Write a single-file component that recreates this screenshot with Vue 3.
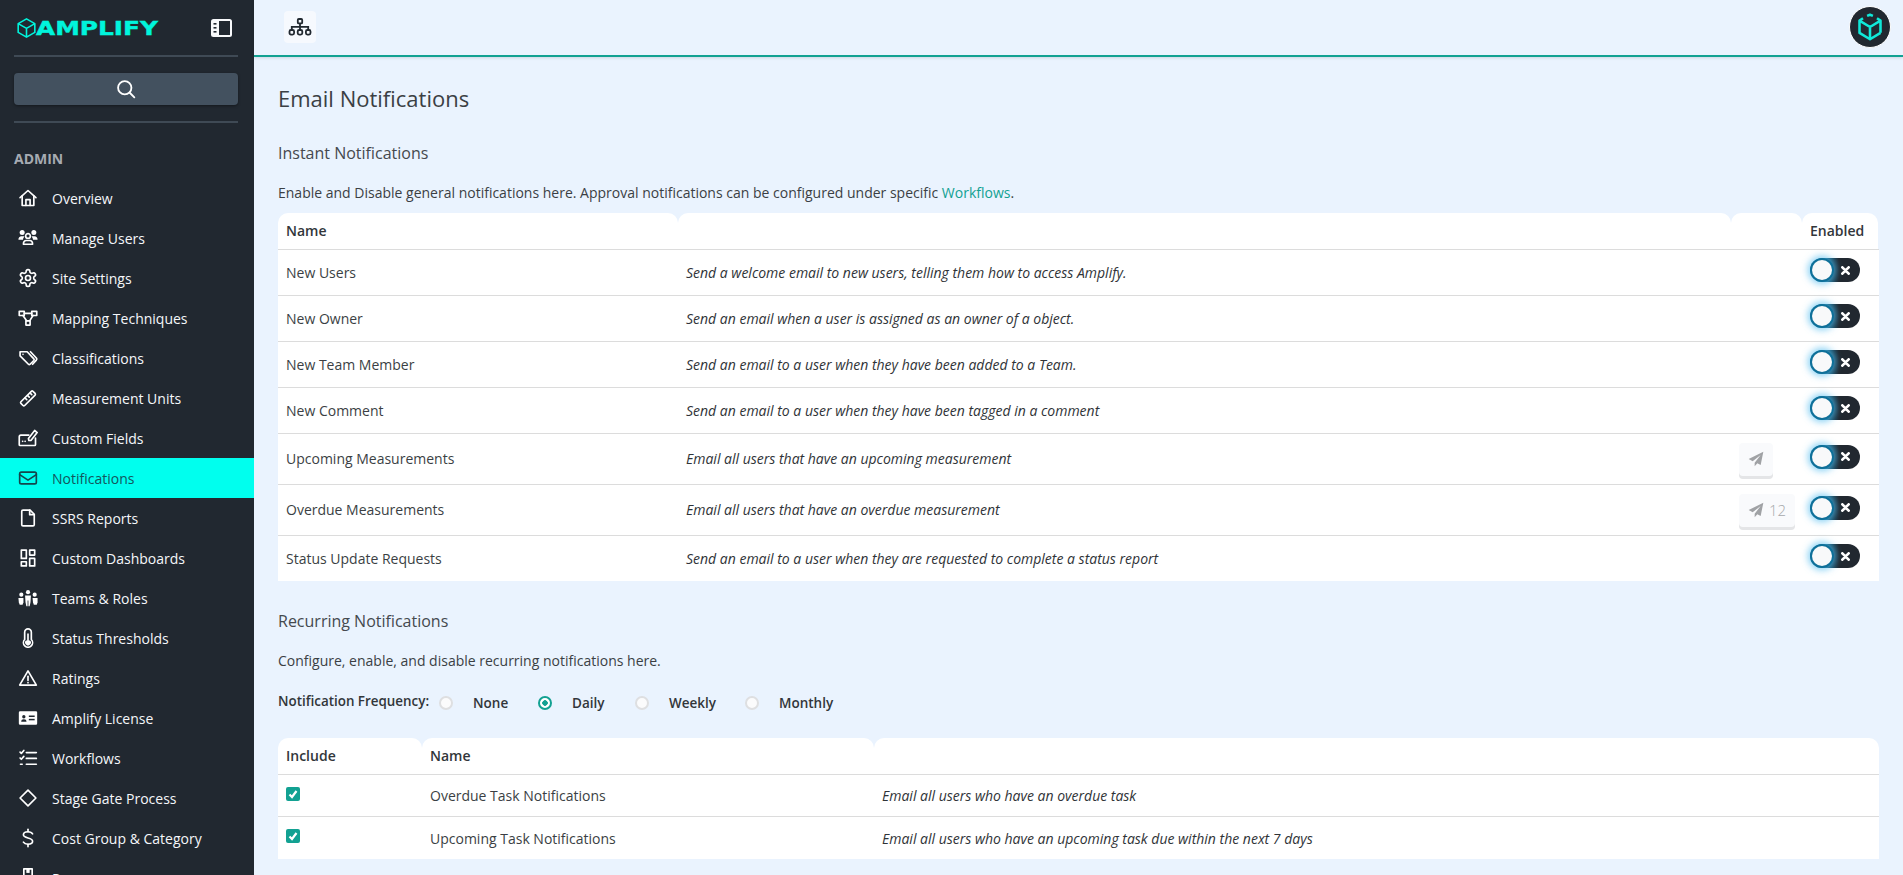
<script setup>
const navItems = [
  { label: 'Overview', icon: ['M2.5 11.5 12 3l9.5 8.5', 'M5 9.5V21h14V9.5', 'M9.5 21v-7h5v7'] },
  { label: 'Manage Users', solid: ['M2 5.5a3 3 0 1 1 6 0 3 3 0 0 1-6 0z', 'M16 5.5a3 3 0 1 1 6 0 3 3 0 0 1-6 0z', 'M0.5 14c0-2.5 1.5-4 3.5-4h2.5c.5 0 1 .2 1.3.5-1 .9-1.7 2-1.8 3.5z', 'M23.5 14c0-2.5-1.5-4-3.5-4h-2.5c-.5 0-1 .2-1.3.5 1 .9 1.7 2 1.8 3.5z'], icon: ['M9.2 9.5a2.8 2.8 0 1 1 5.6 0 2.8 2.8 0 0 1-5.6 0z', 'M6.5 19.5c0-3.2 1.6-4.5 3.5-4.5h4c1.900 0 3.500 1.300 3.500 4.500z'] },
  { label: 'Site Settings', icon: ['M12.22 2h-.44a2 2 0 0 0-2 2v.18a2 2 0 0 1-1 1.73l-.43.25a2 2 0 0 1-2 0l-.15-.08a2 2 0 0 0-2.73.73l-.22.38a2 2 0 0 0 .73 2.73l.15.1a2 2 0 0 1 1 1.72v.51a2 2 0 0 1-1 1.74l-.15.09a2 2 0 0 0-.73 2.73l.22.38a2 2 0 0 0 2.73.73l.15-.08a2 2 0 0 1 2 0l.43.25a2 2 0 0 1 1 1.73V20a2 2 0 0 0 2 2h.44a2 2 0 0 0 2-2v-.18a2 2 0 0 1 1-1.73l.43-.25a2 2 0 0 1 2 0l.15.08a2 2 0 0 0 2.73-.73l.22-.39a2 2 0 0 0-.73-2.73l-.15-.08a2 2 0 0 1-1-1.74v-.5a2 2 0 0 1 1-1.74l.15-.09a2 2 0 0 0 .73-2.73l-.22-.38a2 2 0 0 0-2.73-.73l-.15.08a2 2 0 0 1-2 0l-.43-.25a2 2 0 0 1-1-1.73V4a2 2 0 0 0-2-2z', 'M9 12a3 3 0 1 0 6 0 3 3 0 0 0-6 0z'] },
  { label: 'Mapping Techniques', icon: ['M1.500 4h6v5h-6z', 'M16.500 4h6v5h-6z', 'M9.500 15.500h5v5h-5z', 'M7.500 6.500h9', 'M6 9l4.500 6.500', 'M18 9l-4 6.500'] },
  { label: 'Classifications', icon: ['M2.500 4.500h8.500l8 8.500a1.500 1.500 0 0 1 0 2l-4.500 4.500a1.500 1.500 0 0 1-2 0l-10-10z', 'M15 4.500l7 7.500a2 2 0 0 1 0 2.500l-4.500 5'], dots: ['M6 7.500v.1'] },
  { label: 'Measurement Units', icon: ['M3.500 16.500 16 4a1.500 1.500 0 0 1 2 0l2.500 2.500a1.500 1.500 0 0 1 0 2L8 21a1.500 1.500 0 0 1-2 0l-2.500-2.500a1.500 1.500 0 0 1 0-2z', 'M8.500 12l2 2', 'M11.500 9l2 2', 'M14.500 6l2 2'] },
  { label: 'Custom Fields', icon: ['M13 8.500H3.500a2 2 0 0 0-2 2V20a1 1 0 0 0 1 1H20a1 1 0 0 0 1-1v-8', 'M13 15l-.5-2.500L20 3l3 2.500-7.500 9.500z', 'M5.500 16h.1', 'M8.500 16h.1'] },
  { label: 'Notifications', active: true, icon: ['M4 5h16a2 2 0 0 1 2 2v10a2 2 0 0 1-2 2H4a2 2 0 0 1-2-2V7a2 2 0 0 1 2-2z', 'M2 8l10 6.500L22 8'] },
  { label: 'SSRS Reports', icon: ['M6 2.500h8.500l5 5V20a1.500 1.500 0 0 1-1.500 1.500H6A1.500 1.500 0 0 1 4.500 20V4A1.500 1.500 0 0 1 6 2.500z', 'M14 2.500v5.500h5.500'] },
  { label: 'Custom Dashboards', icon: ['M4 2.500h6v10H4z', 'M14 2.500h6v6h-6z', 'M4 16.500h6v5H4z', 'M14 12.500h6v9h-6z'] },
  { label: 'Teams & Roles', solid: ['M1.500 8a2.500 2.500 0 1 1 5 0 2.500 2.500 0 0 1-5 0z', 'M9.500 5a2.500 2.500 0 1 1 5 0 2.500 2.500 0 0 1-5 0z', 'M17.500 8a2.500 2.500 0 1 1 5 0 2.500 2.500 0 0 1-5 0z', 'M8.500 9h7l-.5 8-1 5h-1.500v-7h-1v7H10l-1-5z', 'M0.500 12h6v5l-1 3H2l-1-3z', 'M17.500 12h6v5l-1 3H19l-1-3z'] },
  { label: 'Status Thresholds', solid: ['M9.500 15a3.500 3.500 0 1 0 5 0z', 'M11 6.500h2V16h-2z'], icon: ['M8 5a4 4 0 0 1 8 0v8.800a5.500 5.500 0 1 1-8 0z'] },
  { label: 'Ratings', icon: ['M12 3.500 22 20.500H2z', 'M12 10v5', 'M12 17.500v.1'] },
  { label: 'Amplify License', solid: ['M2.500 4h19a1.500 1.500 0 0 1 1.500 1.500v13a1.500 1.500 0 0 1-1.500 1.500h-19A1.500 1.500 0 0 1 1 18.500v-13A1.500 1.500 0 0 1 2.500 4z'], cutout: ['M5 10.500a2 2 0 1 1 4 0 2 2 0 0 1-4 0z', 'M3.800 16.500c0-2 1.200-3 3.200-3s3.200 1 3.200 3z', 'M13 9h7v1.800h-7z', 'M13 13h7v1.800h-7z'] },
  { label: 'Workflows', icon: ['M2.500 5l1.500 1.500L7 3', 'M2.500 12l1.500 1.500L7 10', 'M3 19.500h2', 'M10 5.500h12', 'M10 12.500h12', 'M10 19.500h12'] },
  { label: 'Stage Gate Process', icon: ['M12 2.500 21.500 12 12 21.500 2.500 12z'] },
  { label: 'Cost Group & Category', icon: ['M17.500 7c-1-1.800-3-2.500-5.500-2.500-3 0-5.500 1.300-5.500 3.700s2.500 3.100 5.500 3.800 5.500 1.500 5.500 4c0 2.300-2.500 3.500-5.500 3.500-2.500 0-4.500-.8-5.500-2.500', 'M12 1.500v3', 'M12 19.500v3'] },
  { label: 'Programs', icon: ['M7 1h10v22H7z', 'M11 1v4', 'M13 1v4'] }
]

const instantRows = [
  { name: 'New Users', desc: 'Send a welcome email to new users, telling them how to access Amplify.' },
  { name: 'New Owner', desc: 'Send an email when a user is assigned as an owner of a object.' },
  { name: 'New Team Member', desc: 'Send an email to a user when they have been added to a Team.' },
  { name: 'New Comment', desc: 'Send an email to a user when they have been tagged in a comment' },
  { name: 'Upcoming Measurements', desc: 'Email all users that have an upcoming measurement', send: true },
  { name: 'Overdue Measurements', desc: 'Email all users that have an overdue measurement', send: true, count: 12 },
  { name: 'Status Update Requests', desc: 'Send an email to a user when they are requested to complete a status report' }
]

const frequencies = [
  { label: 'None', cls: 'f-none' },
  { label: 'Daily', cls: 'f-daily', on: true },
  { label: 'Weekly', cls: 'f-weekly' },
  { label: 'Monthly', cls: 'f-monthly' }
]

const recurringRows = [
  { name: 'Overdue Task Notifications', desc: 'Email all users who have an overdue task' },
  { name: 'Upcoming Task Notifications', desc: 'Email all users who have an upcoming task due within the next 7 days' }
]
</script>

<template>
  <div class="shell">
    <aside class="sidebar">
      <div class="brand">
        <div class="logo">
          <svg class="logo-cube" viewBox="0 0 24 24" fill="none">
            <path d="M12 1.500 21.500 7v10L12 22.500 2.500 17V7z M2.500 7 12 12.500 21.500 7 M12 12.500v10" />
          </svg>
          <span class="logo-text">AMPLIFY</span>
        </div>
        <svg class="panel-toggle" viewBox="0 0 21 18">
          <rect width="21" height="18" rx="2.500" fill="#f8f9fb" />
          <rect x="8" y="2" width="11" height="14" fill="#212830" />
          <rect x="2.500" y="4" width="3" height="1.600" fill="#212830" />
          <rect x="2.500" y="8" width="3" height="1.600" fill="#212830" />
          <rect x="2.500" y="12" width="3" height="1.600" fill="#212830" />
        </svg>
      </div>
      <div class="rule"></div>
      <button class="search" type="button">
        <svg viewBox="0 0 24 24" fill="none" stroke="#fff" stroke-width="2.200" stroke-linecap="round">
          <circle cx="10.500" cy="10.500" r="8" />
          <path d="M16.500 16.500 22 22" />
        </svg>
      </button>
      <div class="rule"></div>
      <div class="section-label">ADMIN</div>
      <nav class="nav">
        <a v-for="item in navItems" :key="item.label" class="nav-item" :class="{ active: item.active }">
          <svg class="nav-icon" viewBox="0 0 24 24">
            <path v-for="d in item.solid" :key="d" :d="d" class="ic-solid" />
            <path v-for="d in item.cutout" :key="d" :d="d" class="ic-cut" />
            <path v-for="d in item.icon" :key="d" :d="d" class="ic-line" />
            <path v-for="d in item.dots" :key="d" :d="d" class="ic-line" />
          </svg>
          <span>{{ item.label }}</span>
        </a>
      </nav>
    </aside>

    <div class="content">
      <header class="topbar">
        <button class="map-btn" type="button">
          <svg viewBox="0 0 24 18" fill="none" stroke="#212830" stroke-width="1.800">
            <rect x="9.800" y="1" width="4.400" height="4.400" rx="1" />
            <rect x="1.500" y="12" width="4.600" height="4.600" rx="1.500" />
            <rect x="9.700" y="12" width="4.600" height="4.600" rx="1.500" />
            <rect x="17.900" y="12" width="4.600" height="4.600" rx="1.500" />
            <path d="M12 5.400V12 M3.800 12V8.800h16.400V12" />
          </svg>
        </button>
        <div class="avatar">
          <svg viewBox="0 0 24 24" fill="none">
            <path d="M9.500 2.500 12 1.500l2.500 1 M18 4.500l3 2V17M21 17l-9 5.500L3 17V6.500l3-2 M3 6.500 12 12l9-5.500 M12 12v10.500" />
          </svg>
        </div>
      </header>

      <main class="page">
        <h1 class="page-title">Email Notifications</h1>

        <h2 class="section-title instant">Instant Notifications</h2>
        <p class="lead">
          Enable and Disable general notifications here. Approval notifications can be configured under specific
          <a class="link">Workflows</a>.
        </p>

        <div class="table instant-table">
          <div class="thead">
            <div class="th">Name</div>
            <div class="th"></div>
            <div class="th"></div>
            <div class="th">Enabled</div>
          </div>
          <div v-for="row in instantRows" :key="row.name" class="tr" :class="{ tall: row.send }">
            <div class="td">{{ row.name }}</div>
            <div class="td desc">{{ row.desc }}</div>
            <div class="td action">
              <button v-if="row.send" class="send" type="button">
                <svg viewBox="0 0 24 24">
                  <path d="M23 1 1 12l6 3.500L19 6 10 17.500V23l4-4.500 5 2.500z" fill="#a0a2a5" />
                </svg>
                <span v-if="row.count">{{ row.count }}</span>
              </button>
            </div>
            <div class="td toggle-cell">
              <span class="toggle">
                <span class="knob"></span>
                <svg class="toggle-x" viewBox="0 0 10 10">
                  <path d="M1.500 1.500 8.500 8.500 M8.500 1.500 1.500 8.500" />
                </svg>
              </span>
            </div>
          </div>
        </div>

        <h2 class="section-title recurring">Recurring Notifications</h2>
        <p class="lead lead-2">Configure, enable, and disable recurring notifications here.</p>

        <div class="freq">
          <span class="freq-label">Notification Frequency:</span>
          <label v-for="f in frequencies" :key="f.label" class="freq-opt" :class="f.cls">
            <span class="radio" :class="{ on: f.on }"></span>
            <span class="freq-text">{{ f.label }}</span>
          </label>
        </div>

        <div class="table recurring-table">
          <div class="thead">
            <div class="th">Include</div>
            <div class="th">Name</div>
            <div class="th"></div>
          </div>
          <div v-for="row in recurringRows" :key="row.name" class="tr">
            <div class="td check-cell">
              <span class="check">
                <svg viewBox="0 0 14 14" fill="none">
                  <path d="M3.500 7.500 6 10l4.500-6" />
                </svg>
              </span>
            </div>
            <div class="td">{{ row.name }}</div>
            <div class="td desc">{{ row.desc }}</div>
          </div>
        </div>
      </main>
    </div>
  </div>
</template>

<style>
html,
body {
  margin: 0;
  height: 100%;
  overflow: hidden;
}
</style>

<style scoped>
* {
  box-sizing: border-box;
}

.shell {
  display: flex;
  height: 100vh;
  overflow: hidden;
  font-family: "Open Sans", "Liberation Sans", sans-serif;
  font-size: 14px;
  color: #3b3f44;
  background: #eaf3fe;
}

/* Sidebar */
.sidebar {
  flex: 0 0 254px;
  width: 254px;
  height: 100%;
  overflow: hidden;
  background: #212830;
  padding: 0 16px 0 14px;
  display: flex;
  flex-direction: column;
}

.brand {
  height: 55px;
  flex: none;
  display: flex;
  align-items: center;
  justify-content: space-between;
  padding: 0 6px 0 2px;
}

.logo {
  display: flex;
  align-items: center;
  gap: 0;
}

.logo-cube {
  width: 21px;
  height: 22px;
  stroke: #00f5dc;
  stroke-width: 1.800;
  stroke-linejoin: round;
}

.logo-text {
  display: inline-block;
  margin-left: -1px;
  font-family: "DejaVu Sans", sans-serif;
  font-weight: 700;
  font-size: 20px;
  line-height: 20px;
  color: #00f5dc;
  transform: scaleX(1.24);
  transform-origin: left center;
  -webkit-text-stroke: 0.4px #00f5dc;
}

.panel-toggle {
  width: 21px;
  height: 18px;
}

.rule {
  flex: none;
  height: 2px;
  background: #3f4a55;
}

.search {
  flex: none;
  height: 32px;
  margin: 16px 0;
  border: 0;
  border-radius: 4px;
  background: #43515f;
  box-shadow: 0 1px 3px rgba(0, 0, 0, 0.4);
  display: flex;
  align-items: center;
  justify-content: center;
  padding: 0;
}

.search svg {
  width: 20px;
  height: 20px;
}

.section-label {
  flex: none;
  margin-top: 26px;
  height: 20px;
  line-height: 20px;
  font-weight: 700;
  font-size: 14px;
  color: #a6abb2;
}

.nav {
  flex: none;
  margin: 9px -16px 0 -14px;
  display: flex;
  flex-direction: column;
}

.nav-item {
  flex: none;
  height: 40px;
  display: flex;
  align-items: center;
  gap: 14px;
  padding-left: 18px;
  color: #f5f7fa;
  font-size: 14px;
}

.nav-icon {
  flex: none;
  width: 20px;
  height: 20px;
}

.ic-line {
  fill: none;
  stroke: #fff;
  stroke-width: 2;
  stroke-linecap: round;
  stroke-linejoin: round;
}

.ic-solid {
  fill: #fff;
}

.ic-cut {
  fill: #212830;
}

.nav-item.active {
  background: #00ffee;
  color: #14565c;
}

.nav-item.active .ic-line {
  stroke: #14464c;
}

/* Top bar */
.content {
  flex: 1;
  min-width: 0;
  display: flex;
  flex-direction: column;
}

.topbar {
  flex: none;
  height: 57px;
  border-bottom: 2px solid #12a192;
  box-shadow: 0 1px 3px rgba(0, 0, 0, 0.12);
  display: flex;
  align-items: center;
  justify-content: space-between;
  padding: 0 12px 2px 30px;
}

.map-btn {
  width: 32px;
  height: 32px;
  border: 0;
  border-radius: 4px;
  background: #f6f9fe;
  padding: 0;
  display: flex;
  align-items: center;
  justify-content: center;
}

.map-btn svg {
  width: 24px;
  height: 18px;
}

.avatar {
  width: 42px;
  height: 42px;
  border-radius: 50%;
  border: 1px solid #fff;
  background: #212830;
  display: flex;
  align-items: center;
  justify-content: center;
}

.avatar svg {
  width: 28px;
  height: 28px;
  stroke: #10e8d8;
  stroke-width: 2.200;
  stroke-linejoin: round;
}

/* Page */
.page {
  flex: 1;
  min-height: 0;
  padding: 0 24px 0 24px;
}

.page-title {
  margin: 26px 0 0;
  height: 31px;
  line-height: 30px;
  font-weight: 400;
  font-size: 22px;
  color: #3b3f44;
}

.section-title {
  margin: 0;
  height: 22px;
  line-height: 22px;
  font-weight: 400;
  font-size: 16px;
  color: #45494e;
}

.section-title.instant {
  margin-top: 28px;
}

.lead {
  margin: 19px 0 0;
  height: 20px;
  line-height: 20px;
  font-size: 14px;
  color: #3b3f44;
}

.link {
  color: #12a192;
}

.table {
  background: #fff;
}

.instant-table {
  margin-top: 10px;
  background: linear-gradient(#eaf3fe, #eaf3fe) top / 100% 36px no-repeat, #fff;
}

.thead,
.tr {
  display: grid;
  border-bottom: 1px solid #dcdcdc;
}

.tr:last-child {
  border-bottom: 0;
}

.instant-table .thead,
.instant-table .tr {
  grid-template-columns: 400px 1053px 71px 76px;
}

.recurring-table .thead,
.recurring-table .tr {
  grid-template-columns: 144px 452px 1fr;
}

.thead {
  height: 37px;
}

.th {
  background: #fff;
  border-radius: 10px 10px 0 0;
  padding: 0 8px;
  line-height: 35px;
  font-weight: 600;
  font-size: 14px;
  color: #32363a;
}

.instant-table .tr {
  height: 46px;
}

.instant-table .tr.tall {
  height: 51px;
}

.instant-table .tr:last-child {
  height: 45px;
}

.td {
  display: flex;
  align-items: center;
  padding: 0 8px;
  min-width: 0;
  color: #3b3f44;
}

.instant-table .tr.tall .td:nth-child(-n + 2) {
  padding-bottom: 2px;
}

.desc {
  font-style: italic;
  color: #2f3337;
}

.action {
  padding: 0 0 0 8px;
}

.send {
  height: 33px;
  min-width: 34px;
  border: 0;
  border-radius: 4px;
  background: #f9fafc;
  box-shadow: 0 3px 0 #e4e5e7;
  padding: 0 9px;
  display: flex;
  align-items: center;
  gap: 5px;
  font-family: inherit;
  font-size: 15px;
  font-weight: 300;
  color: #a6a8ab;
}

.send svg {
  width: 16px;
  height: 16px;
  flex: none;
}

.toggle-cell {
  padding: 0 0 5px 8px;
}

.toggle {
  position: relative;
  display: block;
  width: 50px;
  height: 24px;
  border-radius: 12px;
  background: linear-gradient(90deg, #0f7099 0%, #0f7099 25%, #212830 58%);
}

.knob {
  position: absolute;
  top: 2px;
  left: 2px;
  width: 20px;
  height: 20px;
  border-radius: 50%;
  background: #f8f9fa;
  box-shadow: 0 0 0 2px #0f7099, 0 0 7px 4px rgba(85, 190, 240, 0.7);
}

.toggle-x {
  position: absolute;
  top: 7.500px;
  left: 31px;
  width: 9px;
  height: 9px;
  stroke: #fff;
  stroke-width: 3;
  stroke-linecap: round;
  fill: none;
}

.section-title.recurring {
  margin-top: 29px;
}

.lead-2 {
  margin-top: 19px;
}

.freq {
  display: flex;
  align-items: center;
  margin-top: 22px;
  height: 20px;
}

.freq-label {
  flex: 0 0 161px;
  width: 161px;
  font-weight: 600;
  font-size: 13.400px;
  color: #32363a;
  margin-top: -4px;
  white-space: nowrap;
}

.freq-opt {
  display: flex;
  align-items: center;
  font-weight: 600;
  color: #32363a;
  font-size: 13.500px;
}

.f-none { width: 99px; }
.f-daily { width: 97px; }
.f-weekly { width: 110px; }

.radio {
  flex: none;
  width: 14px;
  height: 14px;
  margin-right: 20px;
  border-radius: 50%;
  border: 2px solid #dedfe1;
  background: #fbfbfc;
}

.radio.on {
  border: 2px solid #12a192;
  background: radial-gradient(circle, #12a192 0 2.500px, #fff 3px);
}

.recurring-table {
  margin-top: 25px;
  background: linear-gradient(#eaf3fe, #eaf3fe) top / 100% 36px no-repeat, #fff;
}

.recurring-table .tr {
  height: 42px;
}

.check-cell {
  padding-bottom: 4px;
}

.check {
  width: 14px;
  height: 14px;
  border-radius: 2px;
  background: #12a192;
  display: flex;
}

.check svg {
  width: 14px;
  height: 14px;
  stroke: #fff;
  stroke-width: 2.200;
}
</style>
